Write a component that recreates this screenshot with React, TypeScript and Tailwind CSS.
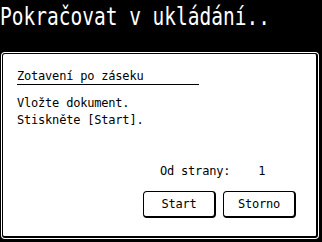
import React from "react";

const mono = { fontFamily: '"DejaVu Sans Mono", "Liberation Mono", monospace' };

function Btn({ label }: { label: string }) {
  return (
    <div className="w-[73px] h-[27px] border border-black border-r-2 border-b-2 rounded-[4px] flex items-center justify-center text-[12px] leading-[14px] text-black tracking-[-0.2px]">
      {label}
    </div>
  );
}

export default function App() {
  return (
    <div className="w-[322px] h-[242px] bg-black overflow-hidden flex flex-col" style={mono}>
      <div className="h-[52px] pt-[2px] pl-[0px] text-white">
        <div className="text-[25px] leading-[30px] whitespace-nowrap origin-left scale-x-[0.78]">
          Pokračovat v ukládání..
        </div>
      </div>
      <div className="ml-[1px] w-[318px] h-[187px] bg-white rounded-[4px] p-[1px] flex">
        <div className="flex-1 border border-black border-r-2 border-b-2 rounded-[3px] bg-white flex flex-col pt-[15px] pl-[14px] text-black text-[12px] tracking-[-0.2px]">
          <div className="w-[182px] leading-[15px] border-b border-black whitespace-nowrap">
            Zotavení po záseku
          </div>
          <div className="mt-[10px] leading-[17px] whitespace-nowrap">
            <div>Vložte dokument.</div>
            <div>Stiskněte [Start].</div>
          </div>
          <div className="mt-[34px] leading-[17px] flex whitespace-nowrap pl-[143px]">
            <span>Od strany:</span>
            <span className="ml-[28px]">1</span>
          </div>
          <div className="mt-[11px] flex gap-[7px] pl-[126px]">
            <Btn label="Start" />
            <Btn label="Storno" />
          </div>
        </div>
      </div>
    </div>
  );
}
